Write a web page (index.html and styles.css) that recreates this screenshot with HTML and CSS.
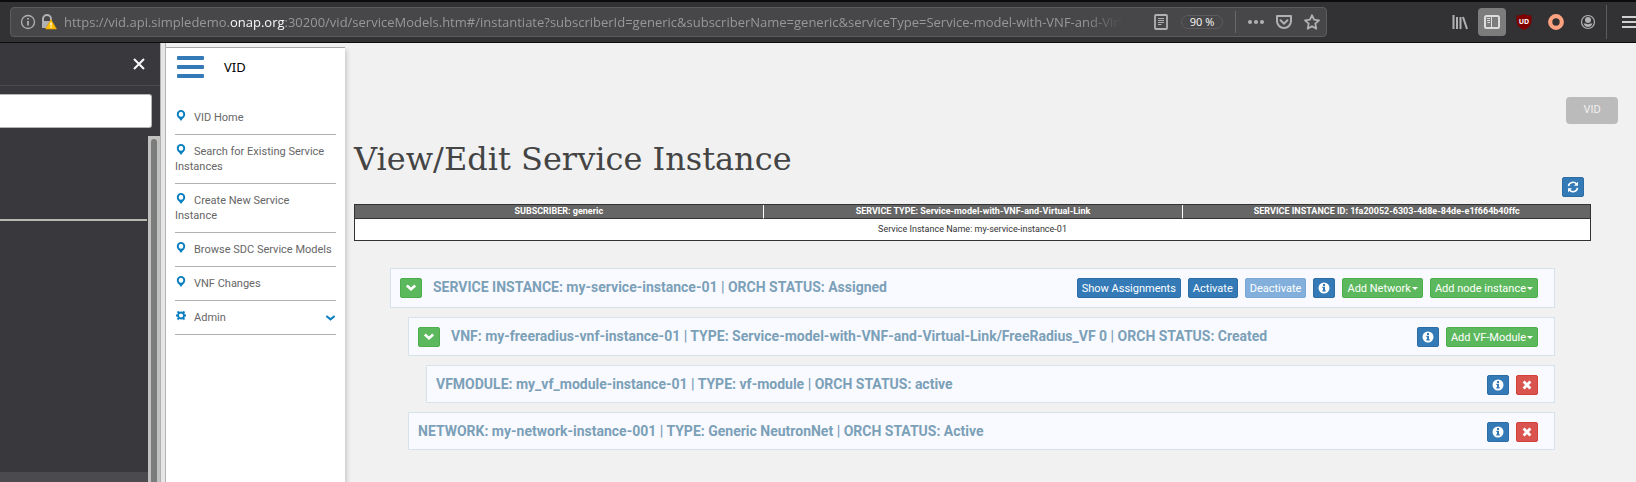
FILE: index.html
```
<!DOCTYPE html>
<html lang="en">
<head>
<meta charset="utf-8">
<title>VID</title>
<link rel="stylesheet" href="styles.css">
</head>
<body>
<svg class="defs" aria-hidden="true">
  <symbol id="pin" viewBox="0 0 9 11"><path fill-rule="evenodd" d="M4.500 0a4.200 4.200 0 0 0-4.200 4.200c0 1.800 1 3.300 2.300 4.300L4.500 11l1.900-2.500c1.300-1 2.300-2.500 2.300-4.300A4.200 4.200 0 0 0 4.500 0zm0 1.800a2.300 2.500 0 1 1 0 5 2.300 2.500 0 0 1 0-5z"/></symbol>
  <symbol id="info" viewBox="0 0 12 12"><circle cx="6" cy="6" r="5.500"/><path class="hole" d="M5 2h2v2H5zM4.300 4.800H7v3.500h.8v1.300H4.300V8.300H5V6.100h-.7z"/></symbol>
  <symbol id="cross" viewBox="0 0 12 12"><path d="M2.600 2.600l6.800 6.800M9.400 2.600L2.600 9.400" fill="none" stroke="#fff" stroke-width="2.800"/></symbol>
  <symbol id="chevron" viewBox="0 0 12 12"><path d="M1.800 3.500L6 7.300l4.200-3.800" fill="none" stroke="currentColor" stroke-width="2.600"/></symbol>
  <symbol id="down" viewBox="0 0 12 12"><path d="M1.500 3.800L6 7.500l4.500-3.700" fill="none" stroke="currentColor" stroke-width="2.200"/></symbol>
</svg>
<header class="browser-bar">
  <div class="url-box">
    <svg class="i16" viewBox="0 0 16 16" fill="none" stroke="#b1b1b3"><circle cx="8" cy="8" r="6.500" stroke-width="1.300"/><path d="M8 7v4.500M8 4v1.600" stroke-width="1.800"/></svg>
    <svg class="i16" viewBox="0 0 16 16"><path d="M2 7V5a4 4 0 0 1 8 0v2" fill="none" stroke="#b1b1b3" stroke-width="2"/><path fill="#b1b1b3" d="M1 7h8v7H1z"/><path d="M10 5.500L15.500 15h-11z" fill="#ffbf00" stroke="#d99a00" stroke-width=".6"/><path d="M10 8.500v3M10 12.500v1.200" stroke="#fff" stroke-width="1.300"/></svg>
    <div class="url" role="textbox" aria-label="Address">https://vid.api.simpledemo.<b>onap.org</b>:30200/vid/serviceModels.htm#/instantiate?subscriberId=generic&amp;subscriberName=generic&amp;serviceType=Service-model-with-VNF-and-Virt</div>
    <svg class="i16" viewBox="0 0 16 16" fill="none" stroke="#b1b1b3"><rect x="2" y="1" width="12" height="14" rx="1" stroke-width="1.800"/><path d="M5 4.500h6M5 6.500h6M5 8.500h6M5 10.500h3.500"/></svg>
    <button class="zoom">90 %</button>
    <div class="url-actions">
      <svg class="i16" viewBox="0 0 16 16" fill="#b1b1b3"><circle cx="2" cy="8" r="2"/><circle cx="8" cy="8" r="2"/><circle cx="14" cy="8" r="2"/></svg>
      <svg class="i16" viewBox="0 0 16 16" fill="none" stroke="#b1b1b3" stroke-width="2"><path d="M1 2h14v5a7 7 0 0 1-14 0z" stroke-linejoin="round"/><path d="M4.500 6.300L8 9.700l3.500-3.400" stroke-linecap="round"/></svg>
      <svg class="i16" viewBox="0 0 16 16" fill="none" stroke="#b1b1b3" stroke-width="1.800" stroke-linejoin="round"><path d="M8 1.200l2 4.500 5 .6-3.700 3.300 1 5L8 12.200l-4.300 2.400 1-5L1 6.300l5-.6z"/></svg>
    </div>
  </div>
  <div class="tools">
    <button class="tool" aria-label="Library"><svg class="i16" viewBox="0 0 16 16" fill="none" stroke="#b1b1b3" stroke-width="2"><path d="M1.500 1v14M5 3v12M8.500 3v12M11 3l4 12"/></svg></button>
    <button class="tool active" aria-label="Sidebars"><svg class="i16" viewBox="0 0 16 16" fill="none" stroke="#dcdcdc"><rect x="1" y="2" width="14" height="12" rx="1.500" stroke-width="2"/><path d="M7.500 2v12M3 4.500h3M3 6.500h3M3.500 8.500H6"/></svg></button>
    <button class="tool" aria-label="uBlock"><svg class="i16" viewBox="0 0 16 16"><path d="M8 0c2 1 4.500 1.500 7.500 1.500V7c0 5-4.500 7.500-7.500 9-3-1.500-7.500-4-7.500-9V1.500C3.500 1.500 6 1 8 0z" fill="#800000"/><text class="shield" x="8" y="10" text-anchor="middle">UD</text></svg></button>
    <button class="tool" aria-label="Ring"><svg class="i16" viewBox="0 0 16 16"><circle cx="8" cy="8" r="5.800" fill="none" stroke="#ffa280" stroke-width="4.200"/></svg></button>
    <button class="tool" aria-label="Account"><svg class="i16" viewBox="0 0 16 16" fill="#b1b1b3"><circle cx="8" cy="8" r="6.500" fill="none" stroke="#b1b1b3" stroke-width="1.200"/><circle cx="8" cy="6" r="3"/><path d="M3.500 9.500h2.200q2.300 1.500 4.600 0h2.200Q11 13 8 13T3.500 9.500z"/></svg></button>
    <button class="app-menu" aria-label="Menu"><svg width="16" height="16" viewBox="0 0 16 16" stroke="#d0d0d0" stroke-width="2"><path d="M0 3h16M0 8h16M0 13h16"/></svg></button>
  </div>
</header>
<div class="window">
  <aside class="side">
    <div class="side-head"><button class="close" aria-label="Close"><svg width="12" height="12" viewBox="0 0 12 12" stroke="#f9f9fa" stroke-width="2"><path d="M1 1l10 10M11 1L1 11"/></svg></button></div>
    <input class="search" type="text" aria-label="Search">
    <div class="tree">
      <div class="tree-list"><div class="tree-top"></div><div class="tree-end"></div></div>
      <div class="track"><div class="thumb"></div></div>
    </div>
  </aside>
  <div class="splitter"></div>
  <nav class="menu">
    <div class="menu-head">
      <button class="burger" aria-label="Toggle menu"><i></i><i></i><i></i></button>
      <span>VID</span>
    </div>
    <a class="item" href="#"><svg class="mi"><use href="#pin"/></svg>VID Home</a>
    <a class="item" href="#"><svg class="mi"><use href="#pin"/></svg>Search for Existing Service Instances</a>
    <a class="item" href="#"><svg class="mi"><use href="#pin"/></svg>Create New Service Instance</a>
    <a class="item" href="#"><svg class="mi"><use href="#pin"/></svg>Browse SDC Service Models</a>
    <a class="item" href="#"><svg class="mi"><use href="#pin"/></svg>VNF Changes</a>
    <a class="item admin" href="#"><span><svg class="mi" viewBox="0 0 10 11"><circle cx="5" cy="5.500" r="3" fill="none" stroke="#0a7fc0" stroke-width="1.800"/><path d="M1.500 1.500l1.700 1.700M8.500 1.500L6.800 3.200M1.500 9.500l1.700-1.700M8.500 9.500L6.800 7.800M0 5.500h2M8 5.500h2" stroke="#0a7fc0" stroke-width="1.800"/></svg>Admin</span><svg class="down"><use href="#down"/></svg></a>
  </nav>
  <main class="page">
    <div class="crumb">VID</div>
    <div class="title-row">
      <h1>View/Edit Service Instance</h1>
      <button class="btn blue icon" aria-label="Refresh"><svg viewBox="0 0 12 12" fill="none"><path d="M1.500 5.200A4.500 4.500 0 0 1 9.500 3M10.500 6.800A4.500 4.500 0 0 1 2.500 9" fill="none" stroke="#fff" stroke-width="1.600"/><path d="M11 .8v4H7zM1 11.200v-4h4z" fill="#fff"/></svg></button>
    </div>
    <table class="summary">
      <thead><tr><th class="edge">SUBSCRIBER: generic</th><th>SERVICE TYPE: Service-model-with-VNF-and-Virtual-Link</th><th class="edge">SERVICE INSTANCE ID: 1fa20052-6303-4d8e-84de-e1f664b40ffc</th></tr></thead>
      <tbody><tr><td colspan="3">Service Instance Name: my-service-instance-01</td></tr></tbody>
    </table>
    <div class="nodes">
      <div class="node">
        <button class="btn green icon" aria-label="Collapse"><svg><use href="#chevron"/></svg></button>
        <span class="label">SERVICE INSTANCE: my-service-instance-01 | ORCH STATUS: Assigned</span>
        <button class="btn blue">Show Assignments</button>
        <button class="btn blue">Activate</button>
        <button class="btn blue" disabled>Deactivate</button>
        <button class="btn blue icon" aria-label="Info"><svg><use href="#info"/></svg></button>
        <button class="btn green">Add Network<i class="caret"></i></button>
        <button class="btn green">Add node instance<i class="caret"></i></button>
      </div>
      <div class="node level1">
        <button class="btn green icon" aria-label="Collapse"><svg><use href="#chevron"/></svg></button>
        <span class="label">VNF: my-freeradius-vnf-instance-01 | TYPE: Service-model-with-VNF-and-Virtual-Link/FreeRadius_VF 0 | ORCH STATUS: Created</span>
        <button class="btn blue icon" aria-label="Info"><svg><use href="#info"/></svg></button>
        <button class="btn green">Add VF-Module<i class="caret"></i></button>
      </div>
      <div class="node leaf level2">
        <span class="label">VFMODULE: my_vf_module-instance-01 | TYPE: vf-module | ORCH STATUS: active</span>
        <button class="btn blue icon" aria-label="Info"><svg><use href="#info"/></svg></button>
        <button class="btn red icon" aria-label="Delete"><svg><use href="#cross"/></svg></button>
      </div>
      <div class="node leaf level1">
        <span class="label">NETWORK: my-network-instance-001 | TYPE: Generic NeutronNet | ORCH STATUS: Active</span>
        <button class="btn blue icon" aria-label="Info"><svg><use href="#info"/></svg></button>
        <button class="btn red icon" aria-label="Delete"><svg><use href="#cross"/></svg></button>
      </div>
    </div>
  </main>
</div>
</body>
</html>
```
FILE: styles.css
```
* { box-sizing: border-box; }
body {
  margin: 0;
  min-height: 100vh;
  display: flex;
  flex-direction: column;
  background: #f1f1f1;
  font-family: Roboto, "Noto Sans", sans-serif;
  font-size: 11px;
  overflow: hidden;
}
button { font: inherit; padding: 0; border: 0; background: none; color: inherit; }
.defs { display: none; }
.i16 { width: 16px; height: 16px; flex: none; display: block; }

/* browser chrome */
.browser-bar {
  display: flex;
  justify-content: space-between;
  align-items: center;
  height: 43px;
  padding-left: 10px;
  background: #323234;
  border-top: 2px solid #0c0c0d;
  border-bottom: 1px solid #0c0c0d;
}
.url-box {
  flex: 0 1 1317px;
  min-width: 0;
  display: flex;
  align-items: center;
  height: 30px;
  padding: 0 6px 0 9px;
  background: #474749;
  border: 1px solid #5c5c5e;
  border-radius: 4px;
}
.url-box > .i16 + .i16 { margin-left: 5px; }
.url {
  flex: 1;
  min-width: 0;
  margin: 0 30px 0 7px;
  overflow: hidden;
  white-space: nowrap;
  color: #98989a;
  font: 13px/20px "Open Sans", "Noto Sans", sans-serif;
  -webkit-mask-image: linear-gradient(to left, transparent, #000 40px);
  mask-image: linear-gradient(to left, transparent, #000 40px);
}
.url b { font-weight: 400; color: #f9f9fa; }
.zoom {
  width: 42px;
  height: 14px;
  margin: 0 12px;
  border: 1px solid #5c5c5e;
  border-radius: 7px;
  color: #f0f0f0;
  font: 11px/12px "Noto Sans", sans-serif;
}
.url-actions {
  display: flex;
  align-items: center;
  gap: 12px;
  height: 22px;
  padding-left: 12px;
  border-left: 1px solid #69696b;
}
.tools { display: flex; align-items: center; gap: 4px; flex: none; }
.tool {
  display: grid;
  place-items: center;
  width: 28px;
  height: 28px;
  border-radius: 4px;
}
.tool.active { background: #7c7c7d; }
.shield { font: bold 7px "Noto Sans", sans-serif; fill: #fff; }
.app-menu {
  height: 34px;
  width: 30px;
  padding-left: 15px;
  border-left: 1px solid #5c5c5e;
  overflow: hidden;
}
.app-menu svg { display: block; }

.window { flex: 1; display: flex; }

/* browser sidebar */
.side {
  width: 160px;
  flex: none;
  display: flex;
  flex-direction: column;
  background: #38383d;
}
.side-head {
  display: flex;
  justify-content: flex-end;
  align-items: center;
  height: 43px;
  padding-right: 15px;
  border-bottom: 1px solid #4a4a4f;
}
.close svg { display: block; }
.search {
  height: 34px;
  margin: 8px 8px 8px 0;
  border: 1px solid #b4b4b4;
  border-left: 0;
  border-radius: 0 3px 3px 0;
  background: #fff;
}
.tree { flex: 1; display: flex; }
.tree-list { flex: 1; display: flex; flex-direction: column; justify-content: space-between; }
.tree-top { height: 85px; margin-right: 1px; border-bottom: 2px solid #b8b8b0; }
.tree-end { height: 10px; background: #4a4a4f; }
.track { width: 12px; display: flex; padding: 3px 3px 0; background: #c1c1bf; }
.thumb { flex: 1; border-radius: 3px 3px 0 0; background: #7b7d7d; }
.splitter {
  width: 6px;
  flex: none;
  background: #e6e6e6;
  border: solid #b0b0b0;
  border-width: 0 1px;
}

/* application menu */
.menu {
  width: 179px;
  flex: none;
  margin-top: 4px;
  padding: 0 9px;
  background: #fff;
  border-top: 1px solid #a8a8a8;
  box-shadow: 2px 3px 4px #ccc;
}
.menu-head {
  display: flex;
  align-items: center;
  gap: 20px;
  height: 37px;
  margin-bottom: 15px;
  padding: 0 2px;
  color: #000;
  font: 13px/16px "Noto Sans", sans-serif;
}
.burger { display: grid; gap: 5px; width: 27px; }
.burger i { height: 4px; border-radius: 1px; background: #337ab7; }
.item {
  display: block;
  padding: 9px 3px 9px 0;
  border-bottom: 1px solid #b0b0b0;
  color: #666;
  line-height: 15px;
  text-decoration: none;
}
.item:first-of-type { padding-top: 10px; }
.mi { width: 10px; height: 11px; margin: 0 8px 0 1px; fill: #0a7fc0; }
.admin { display: flex; justify-content: space-between; align-items: center; padding-right: 0; }
.down { width: 11px; height: 12px; color: #0a7fc0; }

/* page */
.page { flex: 1; min-width: 0; padding: 54px 45px 0 9px; }
.crumb {
  width: 52px;
  margin: 0 -27px 0 auto;
  padding-bottom: 2px;
  border-radius: 4px;
  background: #bbb;
  color: #f0f0f0;
  line-height: 25px;
  text-align: center;
}
.title-row {
  display: flex;
  justify-content: space-between;
  align-items: flex-end;
  padding: 16px 7px 7px 0;
}
h1 {
  margin: 0;
  padding-bottom: 19px;
  color: #444;
  font: 32px/38px "DejaVu Serif", serif;
}
.summary {
  width: 100%;
  table-layout: fixed;
  border-collapse: separate;
  border-spacing: 0;
  border: 1px solid #333;
  background: #fff;
  color: #333;
  font-size: 9px;
  text-align: center;
}
.summary th {
  padding: 0;
  border-bottom: 1px solid #333;
  background: #666;
  color: #fff;
  line-height: 13px;
}
.summary th.edge { width: 33%; }
.summary th + th { border-left: 1px solid #fff; }
.summary td { padding: 0; line-height: 21px; }

.nodes { display: grid; gap: 9px; margin: 27px 36px 0; }
.node {
  display: flex;
  align-items: center;
  gap: 7px;
  padding: 9px 16px 8px 9px;
  border: 1px solid #d8e2ea;
  background: #f9faff;
}
.node:first-child { padding-bottom: 9px; }
.leaf { padding-bottom: 7px; }
.level1 { margin-left: 18px; }
.level2 { margin-left: 36px; }
.label {
  flex: 1;
  padding-bottom: 2px;
  color: #7ba0b8;
  font: 700 14px/18px Roboto, "Noto Sans", sans-serif;
}
.btn + .label { padding-left: 4px; }
.btn {
  display: flex;
  align-items: center;
  justify-content: center;
  height: 20px;
  padding: 0 4px;
  border: 1px solid;
  border-radius: 2px;
  color: #fff;
  white-space: nowrap;
}
.btn svg { width: 12px; height: 12px; fill: #fff; }
.icon { width: 22px; }
.blue { background: #337ab7; border-color: #2e6da4; }
.hole { fill: #337ab7; }
.blue:disabled { background: #82afdb; border-color: #7aa8d4; }
.green { background: #5cb85c; border-color: #4cae4c; }
.red { background: #d9534f; border-color: #d43f3a; }
.caret {
  margin-left: 1px;
  border: 3px solid transparent;
  border-top-color: #fff;
  border-bottom: 0;
}
```
